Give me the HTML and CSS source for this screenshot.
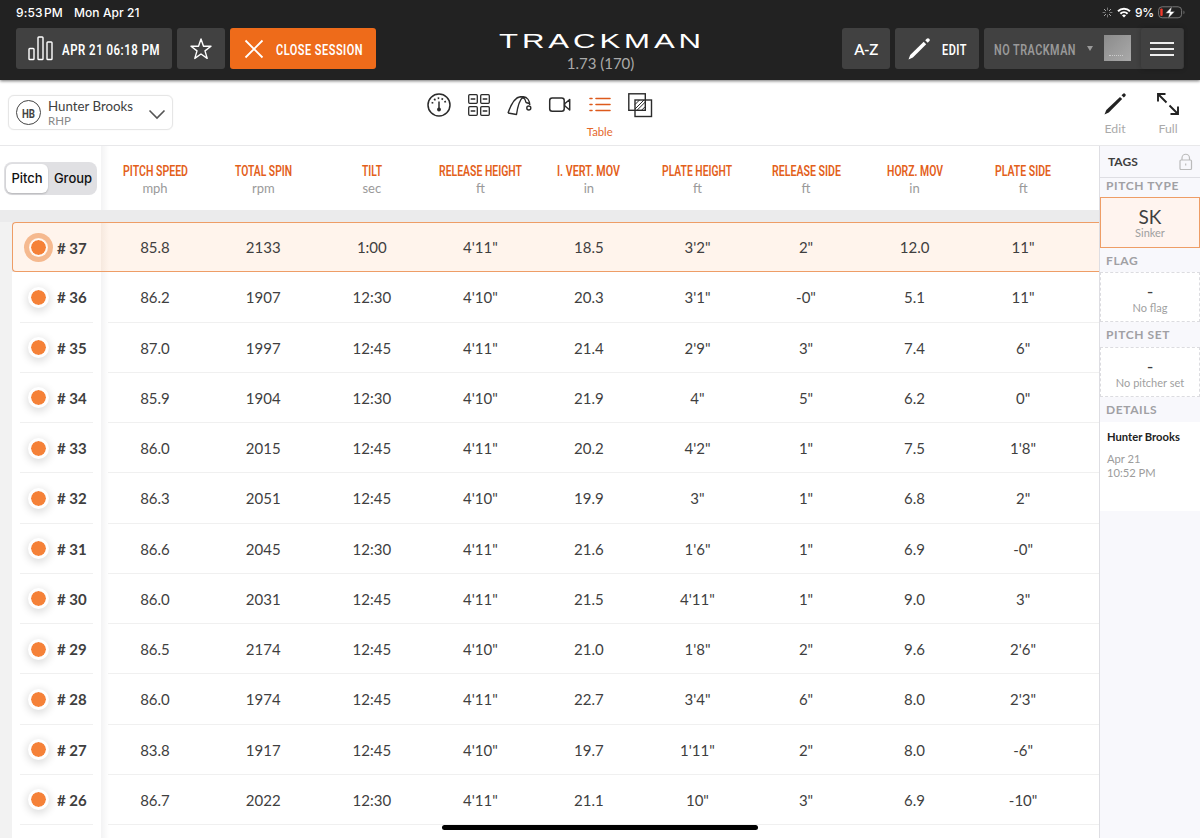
FILE: index.html
```html
<!DOCTYPE html>
<html lang="en">
<head>
  <meta charset="UTF-8" />
  <meta name="viewport" content="width=device-width, initial-scale=1.0"/>
  <title>TrackMan - Table</title>
  <link rel="stylesheet" href="styles.css">
</head>
<body>

  <header class="topbar">
    <div class="status">
      <span>9:53<i class="hair"></i>PM</span>
      <span class="date">Mon Apr 21</span>
      <div class="status-right">
        <svg width="11" height="11" viewBox="0 0 11 11" stroke="#aaa" stroke-width="1" stroke-linecap="round"><path d="M5.5 1v2M5.5 8v2M1 5.5h2M8 5.5h2" stroke="#777"/><path d="M2.3 2.3l1.4 1.4M7.3 7.3l1.4 1.4M2.3 8.7l1.4-1.4M7.3 3.7l1.4-1.4"/></svg>
        <svg width="14" height="11" viewBox="0 0 14 11" fill="none" stroke="#fff" stroke-width="2"><path d="M1 4.2a8.5 8.5 0 0 1 12 0M3.4 6.8a5.1 5.1 0 0 1 7.2 0"/><path d="M7 10.5L5 8.5a2.8 2.8 0 0 1 4 0z" fill="#fff" stroke="none"/></svg>
        <span>9%</span>
        <svg width="28" height="13" viewBox="0 0 28 13"><rect x=".6" y=".8" width="23" height="11" rx="3.5" fill="none" stroke="#777"/><rect x="2.3" y="2.5" width="2.4" height="7.6" rx="1" fill="#f0392b"/><path d="M25.5 4.5v3.8c1.3-.5 1.3-3.3 0-3.8z" fill="#777"/><path d="M14 .5L7.500 7.300h4L10 12.500l6.800-7h-4.100z" fill="#fff" stroke="#222" stroke-width=".4"/></svg>
      </div>
    </div>

    <div class="actions">
      <button class="btn session">
        <svg width="26" height="25" viewBox="0 0 26 25" fill="none" stroke="#fff" stroke-width="1.4"><rect x="1" y="12.5" width="5" height="11" rx=".8"/><rect x="10" y="1" width="5" height="22.5" rx=".8"/><rect x="19" y="6" width="5" height="17.5" rx=".8"/></svg>
        <svg class="cond" width="99" height="20"><text x="0" y="15.5" textLength="98" lengthAdjust="spacingAndGlyphs">APR 21 06:18 PM</text></svg>
      </button>
      <button class="btn star">
        <svg width="24" height="24" viewBox="0 0 24 24" fill="none" stroke="#fff" stroke-width="1.4" stroke-linejoin="round"><path d="M12 2l2.5 7.2 7.5.1-6 4.6 2.2 7.5-6.2-4.4-6.2 4.4L8 13.9 2 9.3l7.500-.1z"/></svg>
      </button>
      <button class="btn close">
        <svg width="20" height="20" viewBox="0 0 20 20" stroke="#fff" stroke-width="1.8"><path d="M1.5 1.5l17 17M18.5 1.5l-17 17"/></svg>
        <svg class="cond" width="86" height="20"><text x="0" y="15.5" textLength="87" lengthAdjust="spacingAndGlyphs">CLOSE SESSION</text></svg>
      </button>

      <div class="brand">
        <svg class="logo" width="202" height="18"><text x="-1" y="15.5" textLength="206" lengthAdjust="spacingAndGlyphs">TRACKMAN</text></svg>
        <div class="version">1.73 (170)</div>
      </div>

      <button class="btn az">A-Z</button>
      <button class="btn edit">
        <svg width="22" height="22" viewBox="0 0 22 22" fill="#fff"><path d="M.5 21.5l1.7-4.6L15.7 3.8l2.5 2.5L4.9 19.6z"/><path d="M17.2 2.3l1.5-1.5a1.7 1.7 0 0 1 2.5 2.5l-1.5 1.5z"/></svg>
        <svg class="cond" width="24" height="20"><text x="0" y="15.5" textLength="25" lengthAdjust="spacingAndGlyphs">EDIT</text></svg>
      </button>
      <div class="device">
        <svg class="cond dim" width="82" height="20"><text x="0" y="15.5" textLength="82" lengthAdjust="spacingAndGlyphs">NO TRACKMAN</text></svg>
        <span class="caret"></span>
        <span class="unit-thumb"></span>
        <button class="menu"><i></i><i></i><i></i></button>
      </div>
    </div>
  </header>

  <nav class="toolbar">
    <div class="player">
      <span class="avatar"><svg class="cond" width="13" height="14"><text x="0" y="12" textLength="13" lengthAdjust="spacingAndGlyphs">HB</text></svg></span>
      <div class="player-text">
        <div class="player-name">Hunter Brooks</div>
        <div class="player-role">RHP</div>
      </div>
      <svg class="chevron" width="18" height="11" viewBox="0 0 18 11" fill="none" stroke="#555" stroke-width="1.6"><path d="M1.5 1.5L9 9l7.500-7.500"/></svg>
    </div>

    <div class="views">
      <!-- gauge -->
      <div class="view"><svg width="26" height="26" viewBox="0 0 26 26" fill="none" stroke="#2b2b2b" stroke-width="1.5"><circle cx="13" cy="13" r="11"/><path d="M13 9.5v7"/><circle cx="13" cy="17.5" r="1.2" fill="#2b2b2b"/><path d="M6.2 11.5a7 7 0 0 1 13.6 0" stroke-width="1.8" stroke-dasharray="1.6 2.3"/></svg></div>
      <!-- tiles -->
      <div class="view"><svg width="26" height="26" viewBox="0 0 26 26" fill="none" stroke="#2b2b2b" stroke-width="1.3"><rect x="2.7" y="2.7" width="8.6" height="8.6" rx="1"/><rect x="14.7" y="2.7" width="8.6" height="8.6" rx="1"/><rect x="2.7" y="14.7" width="8.6" height="8.6" rx="1"/><rect x="14.7" y="14.7" width="8.6" height="8.6" rx="1"/><path d="M4.7 7h4.6M16.7 7h4.6M4.7 19h4.6M16.7 19h4.6"/></svg></div>
      <!-- trajectory -->
      <div class="view"><svg width="26" height="26" viewBox="0 0 26 26" fill="none" stroke="#2b2b2b" stroke-width="1.4" stroke-linejoin="round"><path d="M2 21C5 12.500 9.300 5 14.300 4.700h3c4 .3 6.300 4 6.500 8.300M2 21l8.500 1.500C11.500 15.500 13.500 8 17 5c1.500 1.300 2.500 3 3 5.500M14.300 4.700c1.800 0 3 .8 3.800 1.800M20 10.500l3.200 1"/><circle cx="22.8" cy="16" r="2"/></svg></div>
      <!-- video -->
      <div class="view"><svg width="26" height="26" viewBox="0 0 26 26" fill="none" stroke="#2b2b2b" stroke-width="1.5" stroke-linejoin="round"><rect x="2.7" y="6" width="14.5" height="13.2" rx="2.5"/><path d="M17.7 11.700l5-4.200V18l-5-4.300z"/></svg></div>
      <!-- table -->
      <div class="view active"><svg width="26" height="26" viewBox="0 0 26 26" stroke="#dd5a1c" stroke-width="1.6" stroke-linecap="round"><path d="M3 6.500h2M9 6.500h14M3 12.500h2M9 12.500h14M3 18.500h2M9 18.500h14"/></svg><span>Table</span></div>
      <!-- overlay -->
      <div class="view"><svg width="26" height="26" viewBox="0 0 26 26" fill="none" stroke="#2b2b2b" stroke-width="1.4"><rect x="1.8" y="1.8" width="16.5" height="16.5"/><rect x="8" y="8" width="16.5" height="16.5"/><path d="M8 12.5L12.5 8M8 17l9-9M10 18.3l8.3-8.3M14.5 18.3l3.8-3.8" stroke-width="1"/></svg></div>
    </div>

    <div class="tools">
      <div class="tool"><svg width="22" height="22" viewBox="0 0 22 22" fill="#222"><path d="M.5 21.5l1.8-4.5L16 3.9l2.2 2.2L4.8 19.6z"/><path d="M17.5 2.3l1.4-1.4a1.6 1.6 0 0 1 2.3 2.3l-1.4 1.4z"/></svg><span>Edit</span></div>
      <div class="tool"><svg width="22" height="22" viewBox="0 0 22 22" fill="none" stroke="#222" stroke-width="1.9"><path d="M1 8.5V1h7.5M1 1l8.5 8.5M21 13.5V21h-7.5M21 21l-8.500-8.500"/></svg><span>Full</span></div>
    </div>
  </nav>

  <main>
    <section class="table">
      <div class="table-head">
        <div class="pin">
          <div class="segment"><b>Pitch</b><span>Group</span></div>
        </div>
        <div class="cols" id="columns"></div>
      </div>
      <div class="rows" id="rows"></div>
    </section>

    <aside>
      <div class="tags">TAGS
        <svg width="14" height="18" viewBox="0 0 14 18" fill="none" stroke="#bbb" stroke-width="1.2"><rect x="1" y="7" width="11.5" height="9.5" rx="1"/><path d="M3 7V5a3.7 3.7 0 0 1 7.5 0v2M6.7 10.5v2"/></svg>
      </div>
      <h3 class="first">PITCH TYPE</h3>
      <div class="tile selected"><strong>SK</strong><span>Sinker</span></div>
      <h3 class="after-selected">FLAG</h3>
      <div class="tile"><strong>-</strong><span>No flag</span></div>
      <h3>PITCH SET</h3>
      <div class="tile"><strong>-</strong><span>No pitcher set</span></div>
      <h3>DETAILS</h3>
      <div class="details">
        <b>Hunter Brooks</b>
        <p>Apr 21<br>10:52 PM</p>
      </div>
    </aside>
  </main>

  <div class="home-bar"></div>

  <script src="script.js"></script>
</body>
</html>
```

FILE: styles.css
```css
* {
  box-sizing: border-box;
}

body {
  margin: 0;
  width: 1200px;
  height: 838px;
  overflow: hidden;
  display: flex;
  flex-direction: column;
  background: #fff;
  color: #3f3f3f;
  font-family: Lato, sans-serif;
}

svg {
  display: block;
  flex: none;
}

button {
  border: none;
  padding: 0;
  color: #fff;
  font-family: inherit;
}

/* condensed labels */
.cond {
  overflow: visible;
  font-family: Roboto, sans-serif;
  font-size: 15.5px;
  font-weight: 600;
  letter-spacing: 0.7px;
  fill: #fff;
}

.cond.dim {
  fill: #999;
}

/* top bar */
.topbar {
  height: 80px;
  flex: none;
  background: #222;
  box-shadow: 0 1px 3px rgba(0, 0, 0, 0.55);
  position: relative;
}

.status {
  height: 28px;
  padding: 0 14px 4px 16px;
  display: flex;
  align-items: center;
  color: #fff;
  font: 500 12px Inter, sans-serif;
  letter-spacing: 0.1px;
}

.hair {
  display: inline-block;
  width: 1.5px;
}

.date {
  margin-left: 11px;
}

.status-right {
  margin-left: auto;
  display: flex;
  align-items: center;
  gap: 4px;
}

.status-right span {
  letter-spacing: -0.2px;
}

.actions {
  display: flex;
  padding: 0 16px;
  gap: 5px;
}

.btn {
  height: 41px;
  border-radius: 3px;
  background: #414141;
  display: flex;
  align-items: center;
  justify-content: center;
}

.session {
  width: 156px;
  gap: 8px;
}

.star {
  width: 48px;
}

.close {
  width: 146px;
  gap: 12px;
  background: #ee6b1a;
}

.brand {
  flex: 1;
  height: 44px;
  padding-top: 4px;
  display: flex;
  flex-direction: column;
  align-items: center;
  margin-left: -17px;
}

.logo {
  overflow: visible;
  fill: #fff;
  font: 400 20px "Liberation Sans", sans-serif;
  letter-spacing: 2.5px;
}

.version {
  margin-top: 4px;
  color: #aaa;
  font-size: 15px;
  line-height: 18px;
}

.az {
  width: 48px;
  font-size: 15px;
  font-weight: 600;
  letter-spacing: -0.4px;
}

.edit {
  width: 84px;
  gap: 12px;
}

.device {
  width: 200px;
  height: 41px;
  padding-left: 10px;
  border-radius: 3px;
  background: #414141;
  display: flex;
  align-items: center;
}

.caret {
  margin-left: 11px;
  border: 3.5px solid transparent;
  border-top: 5px solid #999;
  border-bottom: 0;
}

.unit-thumb {
  width: 27px;
  height: 26px;
  margin: -2px 10px 0 11px;
  background: linear-gradient(135deg, #8b8b8b, #aaa);
  display: flex;
  align-items: flex-end;
}

.unit-thumb::after {
  content: "";
  width: 14px;
  margin: 0 0 5px 5px;
  border-top: 1px dotted #ccc;
}

.menu {
  width: 42px;
  height: 41px;
  border-radius: 3px;
  padding: 0 9px;
  background: #414141;
  box-shadow: 0 0 5px rgba(0, 0, 0, 0.25);
  display: flex;
  flex-direction: column;
  justify-content: center;
  gap: 4px;
}

.menu i {
  height: 2px;
  background: #eee;
}

/* toolbar */
.toolbar {
  height: 66px;
  flex: none;
  border-bottom: 1px solid #e8e8ea;
  display: grid;
  grid-template-columns: 427px 1fr 96px;
}

.player {
  width: 165px;
  height: 35px;
  margin: 15px 0 0 8px;
  padding: 0 6px 0 7px;
  border: 1px solid #e6e6e6;
  border-radius: 6px;
  box-shadow: 0 0 1px #ddd;
  display: flex;
  align-items: center;
}

.avatar {
  width: 25px;
  height: 25px;
  border: 1.5px solid #444;
  border-radius: 50%;
  display: flex;
  align-items: center;
  justify-content: center;
}

.avatar .cond {
  font-size: 13.5px;
  font-weight: 700;
  letter-spacing: 0;
  fill: #444;
}

.player-text {
  flex: 1;
  margin-left: 7px;
}

.player-name {
  font-size: 13.3px;
  line-height: 15px;
  margin-top: 1px;
}

.player-role {
  color: #888;
  font-size: 11.5px;
  line-height: 13px;
}

.chevron {
  margin-top: 4px;
}

.views {
  display: flex;
  gap: 14.2px;
  padding-top: 12px;
  margin-left: -1px;
}

.view {
  width: 26px;
  display: flex;
  flex-direction: column;
  align-items: center;
}

.view span {
  margin-top: 7px;
  color: #e5682a;
  font-size: 11.3px;
  line-height: 14px;
}

.tools {
  display: flex;
  gap: 31px;
  padding-top: 13px;
}

.tool {
  width: 22px;
  display: flex;
  flex-direction: column;
  align-items: center;
  color: #aaa;
  font-size: 12.3px;
}

.tool span {
  margin-top: 6px;
}

/* table */
main {
  flex: 1;
  min-height: 0;
  display: flex;
}

.table {
  width: 1099px;
  overflow: hidden;
  background: #ebebec;
}

.table-head {
  height: 64px;
  margin-bottom: 12px;
  background: #fff;
  display: flex;
}

.pin {
  width: 101px;
  flex: none;
  padding: 16px 0 0 4px;
}

.segment {
  width: 93px;
  height: 33px;
  border-radius: 8px;
  background: #e0e0e3;
  padding: 2px;
  display: flex;
  align-items: center;
  color: #111;
  font: 500 13px Inter, sans-serif;
}

.segment b {
  width: 42px;
  height: 29px;
  border-radius: 6px;
  background: #fff;
  box-shadow: 0 1px 2px rgba(0, 0, 0, 0.2);
  font-weight: 500;
  line-height: 28px;
  text-align: center;
}

.segment span {
  flex: 1;
  padding: 0 0 1px 3px;
  text-align: center;
}

.cols {
  width: 998px;
  flex: none;
  display: grid;
  grid-template-columns: 108px repeat(8, 108.55px);
  background: linear-gradient(90deg, #f3f3f4, rgba(255, 255, 255, 0) 8px);
}

.col {
  padding-top: 14px;
  display: flex;
  flex-direction: column;
  align-items: center;
}

.col .cond {
  fill: #e3601a;
  letter-spacing: 0;
}

.col span {
  color: #9a9a9a;
  font-size: 13px;
  line-height: 17px;
}

.rows {
  border-left: 12px solid #f2f2f2;
}

.row {
  height: 50.25px;
  background: #fff;
  display: flex;
}

.row-id {
  width: 73px;
  margin: 0 8px;
  padding-top: 1px;
  border-bottom: 1px solid #f0f0f0;
  display: flex;
  align-items: center;
  gap: 10px;
  font-size: 15px;
  font-weight: 700;
  white-space: nowrap;
}

.dot {
  width: 17px;
  height: 17px;
  margin-left: 10px;
  flex: none;
  border: 1px solid #fff;
  border-radius: 50%;
  background: #f58138;
  background-clip: padding-box;
  box-shadow: 0 0 0 2px #fff, 0 2px 9px 3px rgba(0, 0, 0, 0.14);
}

.cells {
  width: 998px;
  flex: none;
  display: grid;
  grid-template-columns: 108px repeat(8, 108.55px);
  align-items: center;
  text-align: center;
  font-size: 15px;
  background:
    linear-gradient(#f0f0f0, #f0f0f0) 7px 100% / 100% 1px no-repeat,
    linear-gradient(90deg, #f3f3f4, rgba(255, 255, 255, 0) 8px);
}

.row.current {
  border: 1px solid #ee9d66;
  border-right: 0;
  border-radius: 4px 0 0 4px;
  background: #fff4ec;
}

.current .row-id {
  margin-left: 7px;
  border: 0;
}

.current .cells {
  background: linear-gradient(90deg, rgba(160, 120, 90, 0.09), rgba(255, 255, 255, 0) 8px);
}

.current .dot {
  box-shadow: 0 0 0 1px #fff3e9, 0 0 0 6px #f5b98f;
}

/* sidebar */
aside {
  width: 101px;
  border-left: 1px solid #dedee3;
  background: #f8f8fc;
}

.tags {
  height: 32px;
  padding: 0 7px 0 8px;
  border-bottom: 1px solid #dedee3;
  display: flex;
  align-items: center;
  justify-content: space-between;
  font-size: 12px;
  font-weight: 700;
}

h3 {
  height: 25px;
  margin: 0;
  padding-left: 6px;
  color: #a0a0a4;
  font-size: 12px;
  line-height: 25px;
  letter-spacing: 0.6px;
}

h3.first {
  height: 19px;
  line-height: 16px;
}

h3.after-selected {
  height: 24px;
}

.tile {
  height: 50px;
  border: 1px dashed #dcdce0;
  background: #fff;
  display: flex;
  flex-direction: column;
  align-items: center;
}

.tile strong {
  margin-top: 8px;
  font-size: 18px;
  font-weight: 400;
  line-height: 20px;
}

.tile span {
  color: #a0a0a0;
  font-size: 11px;
  line-height: 13px;
}

.tile.selected {
  height: 51px;
  border: 1px solid #ee9d66;
  background: #fff4ef;
}

.tile.selected strong {
  margin-top: 9px;
  line-height: 19px;
  font-size: 19px;
}

.details {
  height: 89px;
  padding: 8px 7px;
  background: #fff;
  font-size: 11.2px;
  line-height: 14px;
}

.details b {
  color: #222;
}

.details p {
  margin: 8px 0 0;
  color: #9c9c9c;
  line-height: 13.5px;
}

.home-bar {
  position: absolute;
  left: 442px;
  top: 825px;
  width: 316px;
  height: 5px;
  border-radius: 3px;
  background: #000;
}
```

FILE: script.js
```js
// name, unit, label width
const columns = [
  ['PITCH SPEED', 'mph', 65],
  ['TOTAL SPIN', 'rpm', 57],
  ['TILT', 'sec', 20],
  ['RELEASE HEIGHT', 'ft', 83],
  ['I. VERT. MOV', 'in', 63],
  ['PLATE HEIGHT', 'ft', 70],
  ['RELEASE SIDE', 'ft', 69],
  ['HORZ. MOV', 'in', 56],
  ['PLATE SIDE', 'ft', 56]
];

const pitches = [
  [37, '85.8', '2133', '1:00', '4\'11"', '18.5', '3\'2"', '2"', '12.0', '11"'],
  [36, '86.2', '1907', '12:30', '4\'10"', '20.3', '3\'1"', '-0"', '5.1', '11"'],
  [35, '87.0', '1997', '12:45', '4\'11"', '21.4', '2\'9"', '3"', '7.4', '6"'],
  [34, '85.9', '1904', '12:30', '4\'10"', '21.9', '4"', '5"', '6.2', '0"'],
  [33, '86.0', '2015', '12:45', '4\'11"', '20.2', '4\'2"', '1"', '7.5', '1\'8"'],
  [32, '86.3', '2051', '12:45', '4\'10"', '19.9', '3"', '1"', '6.8', '2"'],
  [31, '86.6', '2045', '12:30', '4\'11"', '21.6', '1\'6"', '1"', '6.9', '-0"'],
  [30, '86.0', '2031', '12:45', '4\'11"', '21.5', '4\'11"', '1"', '9.0', '3"'],
  [29, '86.5', '2174', '12:45', '4\'10"', '21.0', '1\'8"', '2"', '9.6', '2\'6"'],
  [28, '86.0', '1974', '12:45', '4\'11"', '22.7', '3\'4"', '6"', '8.0', '2\'3"'],
  [27, '83.8', '1917', '12:45', '4\'10"', '19.7', '1\'11"', '2"', '8.0', '-6"'],
  [26, '86.7', '2022', '12:30', '4\'11"', '21.1', '10"', '3"', '6.9', '-10"']
];

document.getElementById('columns').innerHTML = columns.map(([name, unit, w]) => `
  <div class="col">
    <svg class="cond" width="${w}" height="20"><text x="0" y="16" textLength="${w}" lengthAdjust="spacingAndGlyphs">${name}</text></svg>
    <span>${unit}</span>
  </div>`).join('');

document.getElementById('rows').innerHTML = pitches.map(([id, ...values], i) => `
  <div class="row ${i === 0 ? 'current' : ''}">
    <div class="row-id"><span class="dot"></span># ${id}</div>
    <div class="cells">${values.map(v => `<span>${v}</span>`).join('')}</div>
  </div>`).join('') + '<div class="row"><div class="row-id"></div><div class="cells"></div></div>';
```
